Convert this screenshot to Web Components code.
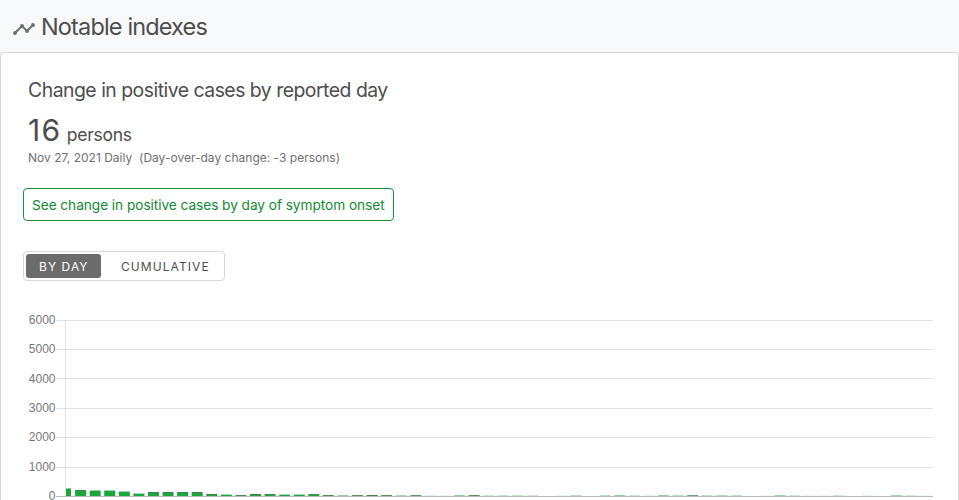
<!DOCTYPE html>
<html lang="en"><head><meta charset="utf-8"><title>Notable indexes</title>
<style>html,body{margin:0;height:100%;overflow:hidden}body{background:#f8f9fb;font-family:Inter,"Liberation Sans",sans-serif;color:#4d4d4d}</style></head>
<body>
<index-page>
<page-heading slot="heading">Notable indexes</page-heading>
<data-card>
<span slot="title">Change in positive cases by reported day</span>
<data-summary slot="summary" value="16" unit="persons">Nov 27, 2021 Daily&nbsp; (Day-over-day change: -3 persons)</data-summary>
<outline-link>See change in positive cases by day of symptom onset</outline-link>
<segment-toggle><span slot="active">BY DAY</span><span slot="other">CUMULATIVE</span></segment-toggle>
<bar-chart></bar-chart>
</data-card>
</index-page>
<script>
const define = (name, html, setup) => customElements.define(name, class extends HTMLElement {
  constructor(){ super(); this.attachShadow({mode:'open'}).innerHTML = html; }
  connectedCallback(){ if (setup) setup(this, this.shadowRoot); }
});
define('index-page', `<style>:host{display:flex;flex-direction:column;height:500px;overflow:hidden}slot[name=heading]{display:block;height:52px;flex:none}</style><slot name="heading"></slot><slot></slot>`);
define('page-heading', `<style>:host{display:flex;align-items:center;height:52px;padding:2px 0 0 12px;gap:5px;box-sizing:border-box;font-size:23.5px;line-height:32px}
svg{width:24px;height:24px;fill:#707070;margin-top:4px}h2{font:inherit;margin:0;letter-spacing:-.85px;white-space:nowrap}</style>
<svg viewBox="0 0 24 24"><path d="M3,14L3.5,14.07L8.07,9.5C7.89,8.85 8.06,8.11 8.59,7.59C9.37,6.8 10.63,6.8 11.41,7.59C11.94,8.11 12.11,8.85 11.93,9.5L14.5,12.07L15,12C15.18,12 15.35,12 15.5,12.07L19.07,8.5C19,8.35 19,8.18 19,8A2,2 0 0,1 21,6A2,2 0 0,1 23,8A2,2 0 0,1 21,10C20.82,10 20.65,10 20.5,9.93L16.93,13.5C17,13.65 17,13.82 17,14A2,2 0 0,1 15,16A2,2 0 0,1 13,14L13.07,13.5L10.5,10.93C10.18,11 9.82,11 9.5,10.93L4.93,15.5L5,16A2,2 0 0,1 3,18A2,2 0 0,1 1,16A2,2 0 0,1 3,14Z"/></svg><h2><slot></slot></h2>`);
define('data-card', `<style>:host{display:flex;flex-direction:column;align-items:flex-start;height:600px;flex:none;box-sizing:border-box;background:#fff;border:1px solid #d9d9d9;border-radius:4px;padding:22px 22px 0;box-shadow:0 0 2px #0001}
h3{font-size:19.4px;font-weight:400;line-height:30px;margin:0 0 0 5px;letter-spacing:-.5px;white-space:nowrap}</style><h3><slot name="title"></slot></h3><slot name="summary"></slot><slot></slot>`);
define('data-summary', `<style>:host{display:block;margin:8px 0 0 5px;white-space:nowrap}.v{line-height:35px;height:36px;font-size:17.5px;letter-spacing:-.25px}b{font-weight:400;font-size:30px;letter-spacing:1.2px;margin-right:5.5px}small{display:block;font-size:12px;line-height:18px;color:#707070;letter-spacing:.01px}</style><div class="v"><b></b><span></span></div><small><slot></slot></small>`, (h,r)=>{r.querySelector('b').textContent=h.getAttribute('value');r.querySelector('span').textContent=h.getAttribute('unit');});
define('outline-link', `<style>:host{display:flex;align-items:center;box-sizing:border-box;width:371px;height:33px;margin-top:21px;padding:0 8px;border:1px solid #1b8f3a;border-radius:4px;color:#138a32;font-size:13.7px;letter-spacing:-.06px;white-space:nowrap}</style><slot></slot>`);
define('segment-toggle', `<style>:host{display:flex;box-sizing:border-box;width:202px;height:30px;margin-top:30px;padding:2px;border:1px solid #d9d9d9;border-radius:4px;font-size:12px;letter-spacing:1.07px}
div{display:flex;align-items:center;box-sizing:border-box;padding:1px 0 0 13px;white-space:nowrap}.a{width:75px;background:#6b6b6b;color:#fff;border-radius:3px}.o{padding-left:20px}</style><div class="a"><slot name="active"></slot></div><div class="o"><slot name="other"></slot></div>`);
define('bar-chart', `<style>:host{display:block;margin-top:19px}svg{display:block;width:911px;height:220px}text{font:12px "Liberation Sans",Arial,sans-serif;fill:#777;text-anchor:end}</style><svg viewBox="23 300 911 220"></svg>`, (h,r)=>{
  const ys=[320,349,378,408,437,467,496];
  let s='<path d="M65.5 320V496" stroke="#e3e3e3"/>';
  ys.forEach((y,i)=>{s+=`<path d="M56 ${y+.5}H933" stroke="${i===6?'#bbb':'#e3e3e3'}"/><text x="55.5" y="${y+(i===2?5:4)}">${6000-i*1000}</text>`;});
  // Each entry: whole pixel rows, then the strength and colour of the top row.
  const bars=[[5,1,'d'],[5,.45],[5,.45],[4,.45],[2,.4],[3,1,'d'],[3,1,'d'],[3,1,'d'],[3,1,'d'],[1,1,'d'],[1,.4],[0,.95,'d'],[1,1,'d'],[1,1,'d'],[1,.4],[1,.4],[1,.95,'d'],
  [0,.95,'d'],[0,.5],[0,.9,'d'],[0,1,'d'],[0,.9,'d'],[0,.4],[0,.85,'d'],[0,.15],[0,.1],[0,.5],[0,.9,'d'],[0,.25],[0,.28],[0,.3],[0,.25],[0,0],[0,.12],[0,.35],[0,0],[0,.35],[0,.5],[0,.25],[0,.12],[0,.5],[0,.35],[0,.75,'d'],[0,.3],[0,.35],[0,.3],[0,0],[0,.06],[0,.45],[0,.22],[0,.1],[0,.1],[0,.25],[0,0],[0,.12],[0,0],[0,.45],[0,.22],[0,.08]];
  s+='<path d="M66 489H71V496H66Z" fill="#1fa43e"/><path d="M66 488H71V489H66Z" fill="#1fa43e" opacity=".55"/>';
  bars.forEach(([n,a,d],i)=>{const x=75.1+i*14.573, w=11;
    if(n)s+=`<rect x="${x}" y="${496-n}" width="${w}" height="${n}" fill="#1ca63e"/>`;
    s+=`<rect x="${x}" y="${495-n}" width="${w}" height="1" fill="${d?'#3f8748':'#1ca34a'}" opacity="${a}"/>`;});
  r.querySelector('svg').innerHTML=s;
});
</script></body></html>
